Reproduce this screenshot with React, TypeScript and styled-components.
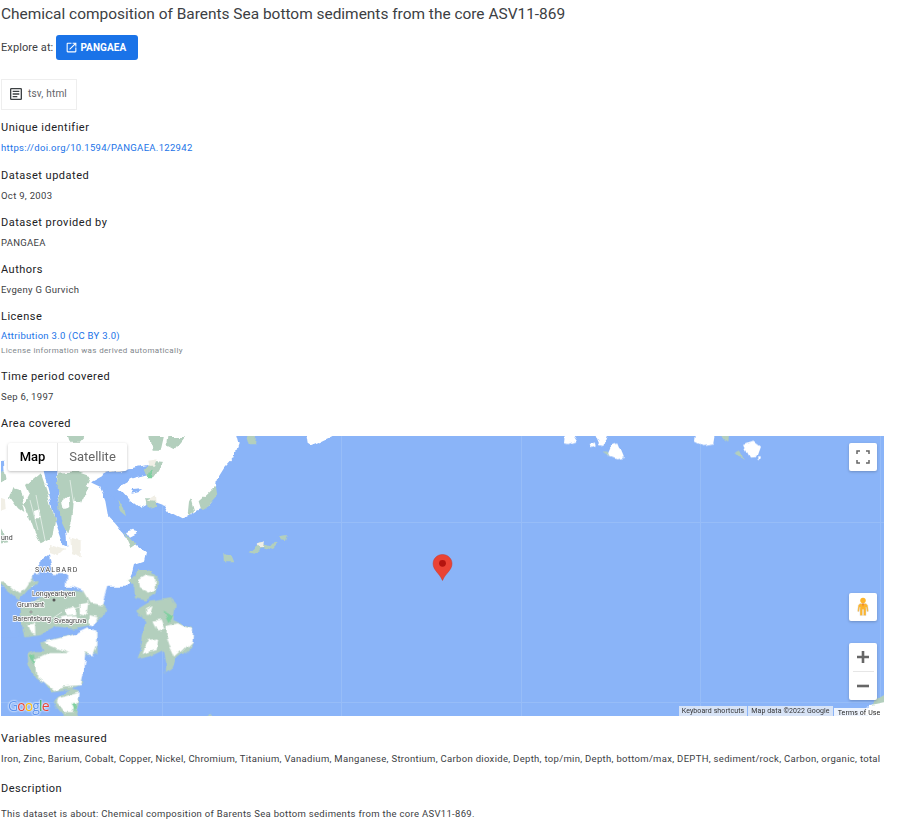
import React from "react";
import styled, { createGlobalStyle } from "styled-components";

const Global = createGlobalStyle`
  html, body { margin: 0; padding: 0; background: #fff; overflow: hidden; height: 824px; }
  body { font-family: Roboto, "Liberation Sans", sans-serif; color: #3c4043; }
`;
const Page = styled.main`
  width: 883px;
  padding-left: 1px;
  display: flex;
  flex-direction: column;
  align-items: stretch;
`;
const Title = styled.h1`
  margin: 4px 0 0;
  font: 400 15.45px/20px Roboto, sans-serif;
  letter-spacing: 0;
  color: #3c4043;
  white-space: nowrap;
`;
const ExploreRow = styled.div`
  display: flex;
  align-items: center;
  gap: 3px;
  margin-top: 11px;
  font: 400 11px/25px Roboto, sans-serif;
  letter-spacing: 0.1px;
  color: #3c4043;
`;
const ExploreButton = styled.a`
  display: flex;
  align-items: center;
  justify-content: center;
  gap: 2px;
  box-sizing: border-box;
  width: 82px;
  height: 25px;
  padding-right: 3px;
  border-radius: 3px;
  background: #1a73e8;
  color: #fff;
  font: 700 10px/25px Roboto, sans-serif;
  letter-spacing: 0.1px;
`;
const FormatChip = styled.div`
  display: flex;
  align-items: center;
  gap: 4px;
  box-sizing: border-box;
  width: 76px;
  height: 31px;
  margin-top: 19px;
  padding: 0 0 2px 6px;
  border: 1px solid #eeeeee;
  font: 400 10px/1 Roboto, sans-serif;
  letter-spacing: 0.2px;
  color: #5f6368;
`;
const Section = styled.section<{ $top: number }>`
  margin-top: ${(p) => p.$top}px;
`;
const Label = styled.h2`
  margin: 0;
  font: 400 11px/14px Roboto, sans-serif;
  letter-spacing: 0.5px;
  color: #202124;
`;
const Value = styled.p<{ $gap?: number }>`
  margin: ${(p) => p.$gap ?? 6}px 0 0;
  font: 400 9.5px/13px Roboto, sans-serif;
  letter-spacing: 0.31px;
  color: #3c4043;
  white-space: nowrap;
`;
const LinkValue = styled(Value)`
  color: #1a73e8;
`;
const Note = styled.p`
  margin: 3px 0 0;
  font: 400 8px/11px Roboto, sans-serif;
  letter-spacing: 0.37px;
  color: #80868b;
`;
const MapFrame = styled.div`
  position: relative;
  width: 883px;
  height: 280px;
  margin-top: 5px;
  overflow: hidden;
  background: #8ab4f8;
`;
const MapArt = styled.svg`
  display: block;
  width: 883px;
  height: 280px;
`;
const MapTypes = styled.div`
  position: absolute;
  left: 7px;
  top: 7px;
  display: flex;
  height: 28px;
  background: #fff;
  border-radius: 2px;
  box-shadow: 0 1px 3px rgba(0, 0, 0, 0.25);
`;
const MapType = styled.div<{ $on?: boolean }>`
  display: flex;
  align-items: center;
  justify-content: center;
  width: ${(p) => (p.$on ? 49 : 69)}px;
  font: ${(p) => (p.$on ? 500 : 400)} 13px/28px Roboto, sans-serif;
  color: ${(p) => (p.$on ? "#000" : "#666")};
  border-right: ${(p) => (p.$on ? "1px solid #e8e8e8" : "none")};
`;
const ControlBox = styled.div<{ $top: number; $height?: number }>`
  position: absolute;
  right: 7px;
  top: ${(p) => p.$top}px;
  width: 28px;
  height: ${(p) => p.$height ?? 28}px;
  display: flex;
  flex-direction: column;
  align-items: center;
  justify-content: center;
  background: #fff;
  border-radius: 2px;
  box-shadow: 0 1px 3px rgba(0, 0, 0, 0.22);
`;
const ZoomDivider = styled.div`
  width: 21px;
  height: 1px;
  background: #e6e6e6;
`;
const ZoomButton = styled.div`
  height: 28px;
  display: flex;
  align-items: center;
  justify-content: center;
`;
const GoogleLogo = styled.div`
  position: absolute;
  left: 7px;
  bottom: 2px;
  font: 400 14px/16px "Open Sans", sans-serif;
  letter-spacing: -0.9px;
  text-shadow: 0 0 2px #fff, 0 0 2px #fff;
`;
const LogoLetter = styled.span<{ $c: string }>`
  color: ${(p) => p.$c};
`;
const Attribution = styled.div`
  position: absolute;
  right: 0;
  bottom: 0;
  display: flex;
  align-items: flex-start;
  gap: 1px;
  height: 10px;
`;
const AttrItem = styled.div<{ $w: number }>`
  width: ${(p) => p.$w}px;
  height: 10px;
  text-align: center;
  background: rgba(245, 245, 245, 0.72);
  color: #333;
  font: 400 7px/10px Roboto, sans-serif;
  letter-spacing: 0.1px;
  white-space: nowrap;
`;
const TermsItem = styled(AttrItem)`
  height: 8px;
  margin-top: 2px;
  background: rgba(255, 255, 255, 0.85);
  line-height: 10px;
  color: #222;
  overflow: hidden;
`;

const GREEN = "#b3cfbd";
const SEA = "#8ab4f8";
const BEIGE = "#f1efe6";

const Mapping = () => (
  <MapArt viewBox="1 436 883 280" role="img" aria-label="Map of Svalbard">
    <defs>
      <filter id="coast" x="-5%" y="-5%" width="110%" height="110%">
        <feTurbulence type="fractalNoise" baseFrequency="0.07" numOctaves="3" seed="4" result="n" />
        <feDisplacementMap in="SourceGraphic" in2="n" scale="7" xChannelSelector="R" yChannelSelector="G" />
        <feGaussianBlur stdDeviation="0.55" />
      </filter>
      <filter id="fine" x="-5%" y="-5%" width="110%" height="110%">
        <feGaussianBlur stdDeviation="0.4" />
      </filter>
    </defs>
    <rect x="1" y="436" width="883" height="280" fill={SEA} />
    <path stroke="#97bdf8" strokeWidth="1" fill="none" d="M1 522.500H884M1 702.500H884M162.500 436V716M341.500 436V716M521.500 436V716M700.500 436V716M880.500 436V716" />
    <g filter="url(#coast)">
      <g transform="translate(0 430) scale(.3333)">
        <path fill="#fff" d="M-20 0H705L716 42L702 82L672 115L650 150L645 195L625 225L590 240L545 268L510 250L495 225L460 212L420 234L390 210L358 175L370 158L400 145L440 130L440 112L390 118L320 130L275 158L300 170L316 210L325 260L345 280L370 310L395 335L438 370L432 395L405 405L400 425L380 470H-20Z" />
        <path fill={SEA} d="M-10 100L12 98L14 130L-10 135ZM128 110H172L172 200L198 300L202 350L190 345L165 270L150 200ZM270 155L320 128L390 118L442 108L446 132L400 143L355 170L345 210L330 190L305 165ZM118 395L150 370L160 420L140 470H118ZM0 445L35 440L35 470H0Z" />
        <path fill={GREEN} d="M448 18H492L482 62L455 62ZM505 18H552L522 56L502 46ZM458 92L492 96L470 135L446 142L432 122ZM648 165L652 195L625 225L604 240L596 214L618 194ZM575 205L585 240L566 254L570 215ZM78 165L122 128L140 180L165 268L158 322L122 340L100 300L72 222L88 190ZM175 128L235 124L270 136L255 176L226 196L216 266L205 315L182 268L170 170ZM226 168L264 172L246 216L226 216ZM-10 128L15 122L20 150L-10 168ZM40 172L60 178L76 252L55 236L30 202ZM436 205L465 205L465 225L440 232ZM352 216L372 236L378 262L360 246ZM370 300L410 345L395 355ZM-10 272L28 340L-10 345ZM415 420L455 420L462 470H400ZM200 18H255L240 35L205 35Z" />
        <path fill={BEIGE} d="M442 92L470 88L462 110L445 110ZM440 212L468 196L470 216ZM210 325L242 335L242 382L215 372ZM150 342L196 356L176 376L150 366ZM-10 195L18 205L20 240L-10 250Z" />
        <path fill="#7fd0a0" d="M445 125L458 122L456 142L445 142Z" />
        <path fill="#fff" d="M378 303L400 296L410 310L390 320ZM280 170L300 185L306 226L280 212ZM102 240L118 235L122 262L104 262ZM185 210L205 195L208 235L190 240Z" />
        <path fill={SEA} d="M395 180L430 177L415 187L395 191Z" />
      </g>
      <g transform="translate(100 430) scale(.3333)">
        <path fill={GREEN} d="M440 10H472L468 46L450 46ZM446 364L480 335L505 345L534 341L516 360L490 352L460 368ZM544 318L564 315L558 333L545 331ZM376 368L390 375L400 400H378Z" />
        <path fill={BEIGE} d="M470 340L495 334L492 348L478 348Z" />
        <path fill="#fff" d="M616 10H712L662 34L632 46L620 38Z" />
      </g>
      <g transform="translate(0 570) scale(.3333)">
        <path fill={GREEN} d="M-10 30L25 12L95 0L102 30L85 62L60 90L35 72L5 45Z" />
        <path fill="#fff" d="M-10 0H100L98 25L78 55L60 72L38 55L15 35H-10Z" />
        <path fill={SEA} d="M100 12L200 12L196 62L150 66L100 62ZM-10 50L30 75L60 100L62 200L-10 200Z" />
        <path fill={GREEN} d="M65 105L150 68L200 58L282 70L322 116L312 136L270 166L216 176L170 170L120 196L76 202L66 150Z" />
        <path fill="#fff" d="M198 -5H355L322 50L305 106L272 100L250 62L200 42ZM195 122L225 112L226 132L205 136ZM238 100L265 94L260 135L240 130ZM266 138L290 145L280 166L265 160ZM85 165L105 160L106 196L94 190ZM178 142L226 136L232 150L192 160Z" />
        <path fill={GREEN} d="M85 38L116 36L112 50L88 50Z" />
        <path fill={GREEN} d="M120 218L250 185L292 180L292 250L256 256L240 300L246 342L212 356L232 360L236 396L226 450H205L158 395L180 376L205 358L150 364L135 342L105 322L85 282L82 246L110 240L130 240Z" />
        <path fill="#fff" d="M132 216L212 196L262 172L292 182L292 226L280 256L256 250L250 300L240 345L190 350L160 360L140 345L112 322L108 266L150 246L206 246L150 226ZM175 382L236 364L232 396L218 426L195 426L170 396Z" />
        <path fill="#7fd0a0" d="M88 256L105 250L108 282ZM215 402H230L225 430Z" />
        <path fill={GREEN} d="M622 440L636 425L634 445Z" />
        <path fill={GREEN} d="M380 25L430 12L445 -5L476 22L470 70L440 92L405 85L402 45Z" />
        <path fill="#fff" d="M416 30L440 15L465 20L468 60L445 68L420 55Z" />
        <path fill={GREEN} d="M408 120L450 95L515 85L527 108L520 150L576 176L575 215L565 240L530 265L516 298L495 310L495 270L490 240L450 260L410 268L425 220L436 150Z" />
        <path fill="#fff" d="M500 168L530 160L576 178L575 215L550 240L525 263L510 230L500 200ZM460 152L485 148L495 175L475 182ZM445 210L475 205L470 240L450 245L425 252L430 238ZM438 115L458 105L450 130L440 135Z" />
        <path fill="#7fd0a0" d="M490 125L520 140L505 160Z" />
      </g>
      <g transform="translate(400 430) scale(.3333)">
        <path fill="#fff" d="M498 10H535L525 35L505 42L495 40ZM585 10H622L610 45L598 42ZM572 42L588 38L590 50L575 55ZM640 40L655 38L672 80L650 85L625 75ZM888 10H945L940 40L905 45L885 35ZM1032 45L1060 35L1080 50L1070 78L1050 80Z" />
        <path fill={GREEN} d="M610 65L625 65L632 78ZM1002 72L1020 65L1032 88ZM945 10H988L985 35Z" />
        <path fill="#fff" d="M1076 78L1083 80L1080 90L1075 88Z" />
      </g>
      <path fill={GREEN} d="M868 716L874 700L890 690V716Z" />
      <path fill="#fff" d="M862 716L870 706L890 702V716Z" />
    </g>
    <g filter="url(#fine)" stroke="#fff" strokeOpacity=".55" strokeWidth="1" fill="none">
      <path d="M30 500L38 530M36 495L45 540M70 480L76 520M72 525L70 555M20 605L40 600M50 620L62 612M70 610L90 604" />
    </g>
    <g fontFamily="Roboto, sans-serif" fontSize="7" fill="#444" stroke="#fff" strokeWidth="1.600" paintOrder="stroke">
      <text x="1" y="540">und</text>
      <text x="35" y="572" letterSpacing="1.100">SVALBARD</text>
      <text x="32" y="596">Longyearbyen</text>
      <text x="17" y="607">Grumant</text>
      <text x="13" y="621">Barentsburg</text>
      <text x="54" y="623">Sveagruva</text>
    </g>
    <circle cx="54" cy="600" r="1.500" fill="#555" />
    <circle cx="31" cy="612" r="1" fill="#fff" stroke="#555" strokeWidth=".6" />
    <path fill="#ea4335" stroke="#c5392c" strokeWidth=".5" d="M442.500 554.500c-5.300 0-9.400 4-9.400 9.200 0 6.600 6.600 9.700 9.400 16.800 2.800-7.100 9.500-10.200 9.500-16.800 0-5.200-4.200-9.200-9.500-9.200z" />
    <circle cx="442.500" cy="563.300" r="3.400" fill="#b3140f" />
  </MapArt>
);

const PegmanIcon = () => (
  <svg width="12" height="22" viewBox="0 0 14 22" aria-hidden="true">
    <circle cx="7" cy="3.500" r="3.200" fill="#fdb52c" />
    <path fill="#fdb52c" stroke="#d8d8d8" strokeWidth=".5" d="M3.500 7h7l2 2 .8 7-1.600.5L10.500 11v10H7.600v-7h-1.200v7H3.500V11L2.300 16.500.7 16l.8-7z" />
    <path fill="#e8772e" d="M6 7h2L7 11z" />
  </svg>
);

const FullscreenIcon = () => (
  <svg width="14" height="14" viewBox="0 0 14 14" fill="none" stroke="#666" strokeWidth="1.500" aria-hidden="true">
    <path d="M1 4V1H4M10 1H13V4M13 10V13H10M4 13H1V10" />
  </svg>
);

const GlyphLine = styled.svg`
  display: block;
`;

export default function App() {
  return (
    <>
      <Global />
      <Page>
        <Title>Chemical composition of Barents Sea bottom sediments from the core ASV11-869</Title>
        <ExploreRow>
          <span>Explore at:</span>
          <ExploreButton>
            <svg width="13" height="13" viewBox="0 0 24 24" fill="#fff" aria-hidden="true">
              <path d="M19 19H5V5h7V3H5a2 2 0 0 0-2 2v14a2 2 0 0 0 2 2h14a2 2 0 0 0 2-2v-7h-2v7zM14 3v2h3.590l-9.830 9.830 1.410 1.410L19 6.410V10h2V3h-7z" />
            </svg>
            PANGAEA
          </ExploreButton>
        </ExploreRow>
        <FormatChip>
          <svg width="16" height="16" viewBox="0 0 24 24" fill="#3c4043" aria-hidden="true">
            <path d="M19 5v14H5V5h14m0-2H5a2 2 0 0 0-2 2v14a2 2 0 0 0 2 2h14a2 2 0 0 0 2-2V5a2 2 0 0 0-2-2zM7 7h10v2H7zm0 4h10v2H7zm0 4h7v2H7z" />
          </svg>
          tsv, html
        </FormatChip>
        <Section $top={11}>
          <Label>Unique identifier</Label>
          <LinkValue>https://doi.org/10.1594/PANGAEA.122942</LinkValue>
        </Section>
        <Section $top={15}>
          <Label>Dataset updated</Label>
          <Value>Oct 9, 2003</Value>
        </Section>
        <Section $top={14}>
          <Label>Dataset provided by</Label>
          <Value>PANGAEA</Value>
        </Section>
        <Section $top={14}>
          <Label>Authors</Label>
          <Value>Evgeny G Gurvich</Value>
        </Section>
        <Section $top={14}>
          <Label>License</Label>
          <LinkValue $gap={5}>Attribution 3.0 (CC BY 3.0)</LinkValue>
          <Note>License information was derived automatically</Note>
        </Section>
        <Section $top={14}>
          <Label>Time period covered</Label>
          <Value>Sep 6, 1997</Value>
        </Section>
        <Section $top={14}>
          <Label>Area covered</Label>
          <MapFrame>
            <Mapping />
            <MapTypes>
              <MapType $on>Map</MapType>
              <MapType>Satellite</MapType>
            </MapTypes>
            <ControlBox $top={7}><FullscreenIcon /></ControlBox>
            <ControlBox $top={157}><PegmanIcon /></ControlBox>
            <ControlBox $top={207} $height={57}>
              <ZoomButton>
                <GlyphLine width="14" height="14" viewBox="0 0 14 14" aria-hidden="true">
                  <path d="M1 7H13M7 1V13" stroke="#666" strokeWidth="2.600" />
                </GlyphLine>
              </ZoomButton>
              <ZoomDivider />
              <ZoomButton>
                <GlyphLine width="14" height="14" viewBox="0 0 14 14" aria-hidden="true">
                  <path d="M1 7H13" stroke="#666" strokeWidth="2.600" />
                </GlyphLine>
              </ZoomButton>
            </ControlBox>
            <GoogleLogo>
              <LogoLetter $c="#5f95ee">G</LogoLetter>
              <LogoLetter $c="#ea4335">o</LogoLetter>
              <LogoLetter $c="#fbbc05">o</LogoLetter>
              <LogoLetter $c="#5f95ee">g</LogoLetter>
              <LogoLetter $c="#34a853">l</LogoLetter>
              <LogoLetter $c="#ea4335">e</LogoLetter>
            </GoogleLogo>
            <Attribution>
              <AttrItem $w={68}>Keyboard shortcuts</AttrItem>
              <AttrItem $w={85}>Map data ©2022 Google</AttrItem>
              <TermsItem $w={50}>Terms of Use</TermsItem>
            </Attribution>
          </MapFrame>
        </Section>
        <Section $top={16}>
          <Label>Variables measured</Label>
          <Value>Iron, Zinc, Barium, Cobalt, Copper, Nickel, Chromium, Titanium, Vanadium, Manganese, Strontium, Carbon dioxide, Depth, top/min, Depth, bottom/max, DEPTH, sediment/rock, Carbon, organic, total</Value>
        </Section>
        <Section $top={17}>
          <Label>Description</Label>
          <Value $gap={11}>This dataset is about: Chemical composition of Barents Sea bottom sediments from the core ASV11-869.</Value>
        </Section>
      </Page>
    </>
  );
}
